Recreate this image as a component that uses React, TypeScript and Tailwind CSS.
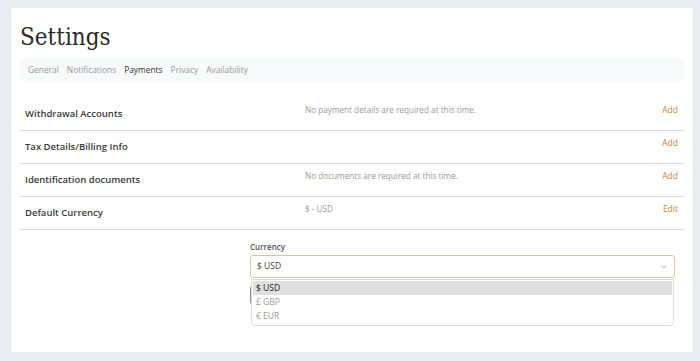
import React from 'react';
import { ChevronDown } from 'lucide-react';

const tabs = ['General', 'Notifications', 'Payments', 'Privacy', 'Availability'];

const rows = [
  { label: 'Withdrawal Accounts', desc: 'No payment details are required at this time.', action: 'Add' },
  { label: 'Tax Details/Billing Info', desc: '', action: 'Add' },
  { label: 'Identification documents', desc: 'No documents are required at this time.', action: 'Add' },
  { label: 'Default Currency', desc: '$ - USD', action: 'Edit' },
];

const options = ['$ USD', '£ GBP', '€ EUR'];

export default function App() {
  return (
    <div className="min-h-[361px] bg-[#e9ecf0] pt-[8px] pl-[11px] pr-[7px] pb-[9px] font-['Open_Sans',sans-serif]">
      <div className="bg-white h-[344px] pt-[13px] px-[9px]">
        {/* Header */}
        <h1 className="font-['DejaVu_Serif_Condensed','DejaVu_Serif',serif] text-[24px] leading-[32px] text-[#2b2b2b] mb-[5px]">
          Settings
        </h1>
        <div className="h-[24px] bg-[#f8f9fa] rounded-md flex items-center gap-[8px] px-[8px] mb-[16px]">
          {tabs.map((t) => (
            <span
              key={t}
              className={t === 'Payments' ? 'text-[8.4px] text-[#333]' : 'text-[8.4px] text-[#999]'}
            >
              {t}
            </span>
          ))}
        </div>

        {/* Payment rows */}
        {rows.map((r) => (
          <div key={r.label} className="h-[33px] border-b border-[#dcdcdc] flex items-start pt-[6px] pl-[5px] pr-[6px]">
            <div className="w-[280px] mt-[2.5px] text-[9.5px] leading-[13px] font-semibold text-[#3a3a3a]">{r.label}</div>
            <div className="flex-1 text-[8.2px] leading-[12px] text-[#9a9a9a]">{r.desc}</div>
            <div className="text-[8.5px] leading-[12px] text-[#c5843f]">{r.action}</div>
          </div>
        ))}

        {/* Currency form */}
        <div className="ml-[230px] mr-[9px] pt-[12px]">
          <div className="text-[8px] leading-[10px] font-semibold text-[#555] mb-[3px]">Currency</div>
          <div className="relative">
            <div className="h-[23px] border border-[#e3c391] rounded-[3px] flex items-center justify-between px-[6px]">
              <span className="text-[8.5px] text-[#444]">$ USD</span>
              <ChevronDown className="w-[8px] h-[8px] text-[#888]" strokeWidth={2} />
            </div>
            <button className="mt-[8px] h-[18px] w-[60px] bg-[#8c8c8c] rounded-[2px]" />
            <div className="absolute top-[24px] left-[1px] right-[1px] h-[47px] bg-white border border-[#dcdcdc] rounded-b-[4px] pt-[1px] px-[1px]">
              {options.map((o, i) => (
                <div
                  key={o}
                  className={
                    i === 0
                      ? 'h-[14px] flex items-center px-[3px] text-[8.5px] text-[#222] bg-[#e0e0e0]'
                      : 'h-[14px] flex items-center px-[3px] text-[8.5px] text-[#999]'
                  }
                >
                  {o}
                </div>
              ))}
            </div>
          </div>
        </div>
      </div>
    </div>
  );
}
